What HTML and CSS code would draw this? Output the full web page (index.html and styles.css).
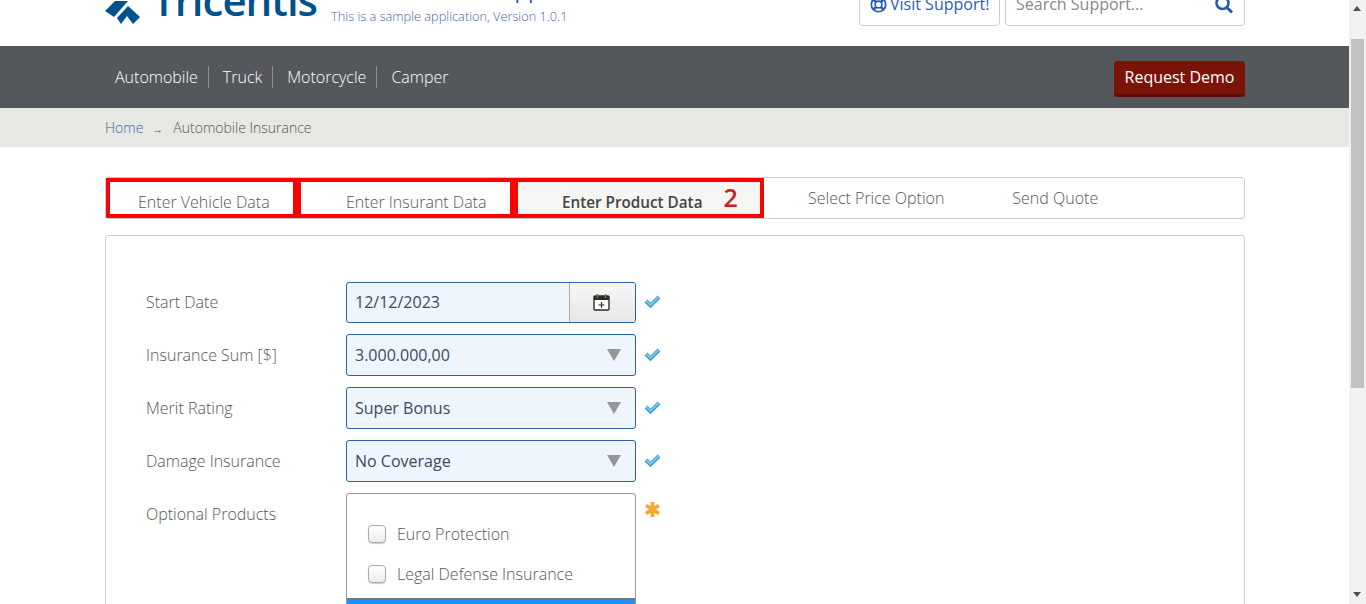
FILE: index.html
```html
<!DOCTYPE html>
<html lang="en">
<head>
  <meta charset="UTF-8" />
  <title>Vehicle Insurance Application</title>
  <link rel="stylesheet" href="styles.css">
</head>
<body>
  <div class="window">
    <div class="content">
      <header class="top">
        <div class="brand">
          <svg class="logo-mark" width="36" height="24" viewBox="0 0 36 24">
            <polygon fill="#00528c" points="0,10 10,0 23,0 9,16" />
            <polygon fill="#00528c" points="12,17 23,5 35,16 28,23 22,15 16,23" />
          </svg>
          <span class="logo-text">Tricentis</span>
          <div class="titles">
            <span class="app-title">Vehicle Insurance Application</span>
            <span class="app-version">This is a sample application, Version 1.0.1</span>
          </div>
        </div>
        <div class="top-right">
          <a class="support-btn" href="#">
            <svg width="17" height="17" viewBox="0 0 17 17">
              <circle cx="8.5" cy="8.5" r="7.2" fill="#fff" stroke="#2a5db0" stroke-width="1.8" />
              <circle cx="8.5" cy="8.5" r="3.4" fill="#fff" stroke="#2a5db0" stroke-width="1.6" />
              <path d="M3.4 3.4l3 3M13.6 3.4l-3 3M3.4 13.6l3-3M13.6 13.6l-3-3" stroke="#2a5db0" stroke-width="2.6" />
            </svg>
            Visit Support!
          </a>
          <div class="search-box">
            <span class="search-text">Search Support...</span>
            <svg width="20" height="20" viewBox="0 0 20 20">
              <circle cx="8.5" cy="8" r="6" fill="none" stroke="#1f5cab" stroke-width="2.6" />
              <path d="M13 12.5l5 5" stroke="#1f5cab" stroke-width="3" />
            </svg>
          </div>
        </div>
      </header>

      <nav class="main-nav">
        <div class="nav-links">
          <a href="#">Automobile</a>
          <a href="#">Truck</a>
          <a href="#">Motorcycle</a>
          <a href="#">Camper</a>
        </div>
        <a class="demo-btn" href="#">Request Demo</a>
      </nav>

      <div class="breadcrumb">
        <a href="#">Home</a>
        <span class="crumb-arrow">&rarr;</span>
        <span>Automobile Insurance</span>
      </div>

      <main class="wizard">
        <div class="tabs">
          <a class="tab tab-marked tab-one" href="#">Enter Vehicle Data</a>
          <a class="tab tab-marked tab-two" href="#">Enter Insurant Data</a>
          <a class="tab tab-marked tab-active" href="#">Enter Product Data <span class="step-no">2</span></a>
          <a class="tab tab-plain tab-four" href="#">Select Price Option</a>
          <a class="tab tab-plain" href="#">Send Quote</a>
        </div>

        <form class="form-box">
          <div class="row date-row">
            <label>Start Date</label>
            <div class="control date-control">
              <span class="date-value">12/12/2023</span>
              <span class="date-btn">
                <svg width="17" height="18" viewBox="0 0 17 18">
                  <rect x="1" y="3" width="15" height="14" rx="1" fill="#fff" stroke="#2b2b2b" stroke-width="1.4" />
                  <rect x="1" y="3" width="15" height="4" fill="#2b2b2b" />
                  <path d="M4.5 1v4M12.5 1v4" stroke="#8a6a3a" stroke-width="1.6" />
                  <path d="M8.5 9v6M5.5 12h6" stroke="#2b2b2b" stroke-width="1.2" />
                </svg>
              </span>
            </div>
            <svg class="check" width="17" height="15" viewBox="0 0 17 15">
              <path d="M2 7l4.5 4.5L15 3" fill="none" stroke="#3f9bd2" stroke-width="4" />
              <path d="M2.5 7l4 4L14.5 3" fill="none" stroke="#7cc6ec" stroke-width="1.8" />
            </svg>
          </div>

          <div class="row">
            <label>Insurance Sum [$]</label>
            <div class="control select-control"><span>3.000.000,00</span><i class="caret"></i></div>
            <svg class="check" width="17" height="15" viewBox="0 0 17 15">
              <path d="M2 7l4.5 4.5L15 3" fill="none" stroke="#3f9bd2" stroke-width="4" />
              <path d="M2.5 7l4 4L14.5 3" fill="none" stroke="#7cc6ec" stroke-width="1.8" />
            </svg>
          </div>

          <div class="row">
            <label>Merit Rating</label>
            <div class="control select-control"><span>Super Bonus</span><i class="caret"></i></div>
            <svg class="check" width="17" height="15" viewBox="0 0 17 15">
              <path d="M2 7l4.5 4.5L15 3" fill="none" stroke="#3f9bd2" stroke-width="4" />
              <path d="M2.5 7l4 4L14.5 3" fill="none" stroke="#7cc6ec" stroke-width="1.8" />
            </svg>
          </div>

          <div class="row">
            <label>Damage Insurance</label>
            <div class="control select-control"><span>No Coverage</span><i class="caret"></i></div>
            <svg class="check" width="17" height="15" viewBox="0 0 17 15">
              <path d="M2 7l4.5 4.5L15 3" fill="none" stroke="#3f9bd2" stroke-width="4" />
              <path d="M2.5 7l4 4L14.5 3" fill="none" stroke="#7cc6ec" stroke-width="1.8" />
            </svg>
          </div>

          <div class="row">
            <label>Optional Products</label>
            <div class="multi">
              <div class="option"><i class="box"></i>Euro Protection</div>
              <div class="option"><i class="box"></i>Legal Defense Insurance</div>
              <div class="multi-bar">Select all</div>
            </div>
            <svg class="star" width="17" height="17" viewBox="0 0 17 17">
              <path d="M8.5 1v15M2 4.5l13 8M15 4.5l-13 8" stroke="#f7a733" stroke-width="3.8" />
            </svg>
          </div>
        </form>
      </main>
    </div>

    <div class="scrollbar">
      <span class="arrow-up"></span>
      <span class="thumb"></span>
      <span class="arrow-down"></span>
    </div>
  </div>
</body>
</html>
```

FILE: styles.css
```css
* { box-sizing: border-box; margin: 0; padding: 0; }
html, body { height: 100%; overflow: hidden; }
body { background: white; color: #555; font-family: "Open Sans", sans-serif; font-size: 16px; }
a { text-decoration: none; color: inherit; }

.window { display: flex; height: 604px; }
.content { flex: 1; min-width: 0; height: 604px; overflow: hidden; }

/* header is scrolled partly out of view */
.top {
  height: 46px;
  padding: 0 104px 0 105px;
  display: flex;
  justify-content: space-between;
  align-items: flex-end;
  overflow: hidden;
}
.brand { display: flex; align-items: flex-end; height: 46px; padding-bottom: 22px; }
.logo-mark { flex: none; margin-bottom: -1px; }
.logo-text {
  margin-left: 11px;
  margin-bottom: 1px;
  font-size: 42px;
  line-height: 46px;
  font-weight: 600;
  color: #00528c;
  height: 46px;
  letter-spacing: -1px;
}
.titles { display: flex; flex-direction: column; margin-left: 14px; margin-bottom: -1px; }
.app-title { margin: 0 0 12px -16px; font-size: 22px; line-height: 12px; color: #1f5cab; white-space: nowrap; }
.app-version { font-size: 12.75px; line-height: 18px; font-weight: 300; color: #3f63a8; white-space: nowrap; }

.top-right { display: flex; gap: 5px; padding-bottom: 20px; }
.support-btn, .search-box {
  height: 40px;
  border: 1px solid #ccc;
  border-radius: 4px;
  display: flex;
  align-items: flex-end;
  font-size: 16px;
}
.support-btn { width: 141px; padding: 0 10px 10px; gap: 3px; color: #2a5db0; white-space: nowrap; }
.support-btn svg { margin-bottom: 2px; flex: none; }
.search-box { width: 240px; padding: 0 10px 10px; justify-content: space-between; color: #888; }
.search-text { font-weight: 400; }

.main-nav {
  height: 62px;
  padding: 0 104px 0 105px;
  background: #54575c;
  display: flex;
  justify-content: space-between;
  align-items: center;
}
.nav-links { display: flex; }
.nav-links a {
  padding: 0 10px 0 9px;
  margin-right: 5px;
  border-right: 1px solid #8d9094;
  height: 22px;
  line-height: 22px;
  color: white;
  font-weight: 300;
}
.nav-links a:first-child { padding-left: 10px; }
.nav-links a:last-child { border-right: none; }
.demo-btn {
  width: 131px;
  height: 36px;
  margin-top: 4px;
  background: #7c1309;
  border-bottom: 3px solid #5e0e05;
  border-radius: 3px;
  color: white;
  text-align: center;
  line-height: 32px;
}

.breadcrumb {
  height: 39px;
  padding-left: 105px;
  background: #e7e7e3;
  display: flex;
  align-items: center;
  font-size: 14px;
  font-weight: 300;
  color: #555;
}
.breadcrumb a { color: #3f63a8; }
.crumb-arrow { font-size: 11px; margin: 2px 10px 0 9px; }

.wizard { padding: 30px 104px 0 105px; }
.tabs {
  height: 42px;
  border: 1px solid #ccc;
  border-radius: 3px;
  display: flex;
}
.tab { display: block; font-weight: 300; white-space: nowrap; }
.tab-marked { height: 40px; border: 4px solid red; padding-top: 9px; line-height: 22px; }
.tab-one { width: 191px; padding-left: 28px; }
.tab-two { width: 217px; padding-left: 45px; }
.tab-active {
  display: flex;
  align-items: flex-start;
  width: 250px;
  padding-left: 44px;
  background: #f5f5f3;
  font-weight: 600;
  font-size: 15.25px;
  color: #444;
}
.step-no { margin: -5px 0 0 21px; font-size: 25px; line-height: 22px; color: #c0281e; }
.tab-plain { line-height: 40px; }
.tab-four { margin-left: 44px; margin-right: 68px; }

.form-box {
  margin-top: 16px;
  height: 500px;
  padding: 46px 40px 0;
  border: 1px solid #ccc;
  border-radius: 3px;
  display: flex;
  flex-direction: column;
  gap: 11px;
}
.row { display: flex; align-items: flex-start; }
.row label { width: 200px; font-weight: 300; line-height: 42px; flex: none; }
.date-row label { line-height: 40px; }
.control {
  width: 290px;
  height: 42px;
  border: 1px solid #2a63a8;
  border-radius: 3px;
  background: #eef5fd;
  display: flex;
  align-items: center;
  justify-content: space-between;
  color: #3c4a60;
}
.date-control { height: 41px; overflow: hidden; }
.date-value { padding: 0 0 2px 8px; }
.date-btn {
  width: 67px;
  height: 41px;
  margin-right: -1px;
  padding: 0 2px 2px 0;
  border: 1px solid #aaa;
  border-radius: 0 3px 3px 0;
  background: linear-gradient(#f7f7f7, #e6e6e6);
  display: flex;
  align-items: center;
  justify-content: center;
}
.select-control { padding: 0 14px 0 8px; }
.caret {
  width: 0;
  height: 0;
  border-left: 7.5px solid transparent;
  border-right: 7.5px solid transparent;
  border-top: 12px solid #969696;
}
.check { flex: none; margin: 13px 0 0 8px; }
.date-row .check { margin-top: 12px; }
.star { flex: none; margin: 8px 0 0 8px; }

.multi {
  position: relative;
  width: 290px;
  height: 200px;
  border: 1px solid #999;
  border-radius: 3px;
  padding-top: 20px;
  font-weight: 300;
}
.option { height: 40px; padding-left: 21px; display: flex; align-items: center; gap: 11px; }
.box {
  width: 18px;
  height: 18px;
  border: 1px solid #aaa;
  border-radius: 4px;
  background: linear-gradient(#fff, #ececec);
  box-shadow: 0 1px 1px #ccc;
}
.multi-bar {
  margin-top: 4px;
  height: 80px;
  padding: 3px 0 0 13px;
  border-top: 2px solid #777;
  background: #1e90ff;
  color: white;
  font-weight: 400;
  line-height: 16px;
}

.scrollbar { width: 17px; flex: none; background: #f1f1f1; position: relative; }
.thumb { position: absolute; left: 2px; top: 39px; width: 13px; height: 349px; background: #c1c1c1; }
.arrow-up, .arrow-down {
  position: absolute;
  left: 4px;
  width: 0;
  height: 0;
  border-left: 4px solid transparent;
  border-right: 4px solid transparent;
}
.arrow-up { top: 6px; border-bottom: 5px solid #505050; }
.arrow-down { top: 592px; border-top: 5px solid #505050; }
```
